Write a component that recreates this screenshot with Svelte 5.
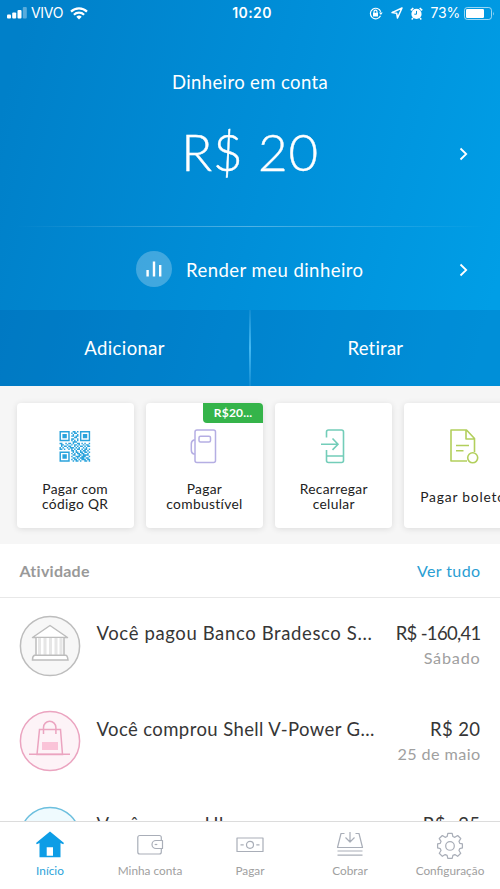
<script>
  const qrRows = [
    '111111100110101111111',
    '100000101011001000001',
    '101110100100101011101',
    '101110101101101011101',
    '101110100011001011101',
    '100000101100101000001',
    '111111101010101111111',
    '000000000111000000000',
    '110010110100110101001',
    '011001001011010010110',
    '010110110010101101011',
    '101001011101010010100',
    '110100101010110101101',
    '000000001101001011010',
    '111111100101101101101',
    '100000101010110110010',
    '101110100110011011110',
    '101110101001110111001',
    '101110100110101110110',
    '100000101011010111011',
    '111111100101101001101'
  ];
  const qrPath = qrRows
    .map((row, y) => [...row].map((c, x) => (c === '1' ? `M${x} ${y}h1v1h-1z` : '')).join(''))
    .join('');

  const shortcuts = [
    { icon: 'qr', label: 'Pagar com\ncódigo QR' },
    { icon: 'fuel', label: 'Pagar\ncombustível', badge: 'R$20...' },
    { icon: 'phone', label: 'Recarregar\ncelular' },
    { icon: 'bill', label: 'Pagar boleto' }
  ];

  const activity = [
    { icon: 'bank', title: 'Você pagou Banco Bradesco S...', amount: 'R$ -160,41', date: 'Sábado' },
    { icon: 'bag', title: 'Você comprou Shell V-Power G...', amount: 'R$ 20', date: '25 de maio' },
    { icon: 'car', title: 'Você pagou Uber', amount: 'R$ -25', date: '' }
  ];

  const tabs = [
    { icon: 'home', label: 'Início' },
    { icon: 'wallet', label: 'Minha conta' },
    { icon: 'cash', label: 'Pagar' },
    { icon: 'collect', label: 'Cobrar' },
    { icon: 'gear', label: 'Configuração' }
  ];
</script>

<div class="screen">
  <header>
    <div class="status">
      <div class="left">
        <svg width="20" height="12" viewBox="0 0 20 12" fill="#fff">
          <rect x="0" y="7.5" width="4" height="4" rx="1" />
          <rect x="5.2" y="5.5" width="4" height="6" rx="1" />
          <rect x="10.5" y="3" width="4" height="8.5" rx="1" />
          <rect x="15.8" y="0" width="4" height="11.5" rx="1" opacity=".35" />
        </svg>
        <span class="carrier">VIVO</span>
        <svg class="wifi" width="18" height="13" viewBox="0 0 18 13" fill="none" stroke="#fff" stroke-width="2.2">
          <path d="M1 4.6a11.5 11.5 0 0 1 16 0" />
          <path d="M3.9 7.7a7.3 7.3 0 0 1 10.2 0" />
          <path d="M9 12.5L6.3 9.8a3.9 3.9 0 0 1 5.4 0z" fill="#fff" stroke="none" />
        </svg>
      </div>
      <b class="clock">10:20</b>
      <div class="right">
        <svg width="14" height="13" viewBox="0 0 14 13" fill="none" stroke="#fff" stroke-width="1.2">
          <path d="M11.5 8.8A5.3 5.3 0 1 1 11.7 4.8" />
          <path d="M10 5.5h3.7L11.9 8z" fill="#fff" stroke="none" />
          <rect x="4" y="5.8" width="5" height="3.7" fill="#fff" stroke="none" />
          <path d="M5 6V4.7a1.5 1.5 0 0 1 3 0V6" />
        </svg>
        <svg class="loc" width="12" height="12" viewBox="0 0 12 12" fill="none" stroke="#fff" stroke-width="1.5" stroke-linejoin="round">
          <path d="M11 1L1 5.6l4.7.7L6.5 11z" />
        </svg>
        <svg class="alarm" width="13" height="13" viewBox="0 0 13 13">
          <circle cx="6.5" cy="6.9" r="5.1" fill="#fff" />
          <path d="M.8 3.400L3.300 1M12.200 3.400L9.700 1M3 11l-1.300 1.500M10 11l1.300 1.500" stroke="#fff" stroke-width="1.5" />
          <path d="M6.500 3.900v3.300H4.300" fill="none" stroke="#0494dc" stroke-width="1" />
        </svg>
        <span class="pct">73%</span>
        <svg width="31" height="13" viewBox="0 0 31 13">
          <rect x=".5" y=".5" width="27" height="12" rx="2.8" fill="none" stroke="#fff" stroke-opacity=".6" />
          <rect x="2" y="2" width="18" height="9" rx="1.2" fill="#fff" />
          <path d="M29 4.500q1.500 2 0 4z" fill="#fff" opacity=".6" />
        </svg>
      </div>
    </div>

    <div class="balance">
      <span class="caption">Dinheiro em conta</span>
      <span class="amount">R$ 20</span>
      <svg class="chevron" width="9" height="14" viewBox="0 0 9 14"><path d="M1.500 1.500L7.200 7l-5.700 5.500" /></svg>
    </div>

    <div class="invest">
      <span class="chart">
        <svg width="16" height="16" viewBox="0 0 16 16" stroke="#fff" stroke-width="2.4">
          <path d="M1.600 9v6.500M8 .5v15M14.200 4v11.500" />
        </svg>
      </span>
      <span class="label">Render meu dinheiro</span>
      <svg class="chevron" width="9" height="14" viewBox="0 0 9 14"><path d="M1.500 1.500L7.200 7l-5.700 5.500" /></svg>
    </div>

    <div class="actions">
      <span>Adicionar</span>
      <i></i>
      <span class="take">Retirar</span>
    </div>
  </header>

  <section class="shortcuts">
    {#each shortcuts as s}
      <div class="card {s.icon}">
        {#if s.badge}<span class="badge">{s.badge}</span>{/if}
        {#if s.icon === 'qr'}
          <svg width="36" height="36" viewBox="-2 -2 36 36"><path transform="translate(.5 0) scale(1.46)" d={qrPath} fill="#2aa3dc" /></svg>
        {:else if s.icon === 'fuel'}
          <svg width="36" height="36" viewBox="0 0 36 36" fill="none" stroke="#b5aee3" stroke-width="1.5" stroke-linejoin="round">
            <rect x="9" y="1" width="20.5" height="32.5" rx="2" />
            <rect x="13" y="7.2" width="11.5" height="5.8" rx="1.5" />
            <path d="M9 11H7.800q-2.500 1-2.500 4v6q0 3.500 2.500 4H9" />
          </svg>
        {:else if s.icon === 'phone'}
          <svg width="36" height="36" viewBox="0 0 36 36" fill="none" stroke="#73cdb9" stroke-width="1.6">
            <path d="M10.500 8.500V3q0-2 2-2h13q2 0 2 2v28.500q0 2-2 2h-13q-2 0-2-2V21M10.500 27h17" />
            <path d="M5 15.200h16.500M16.500 9.500l5.500 5.700-5.500 5.700" />
          </svg>
        {:else}
          <svg width="36" height="36" viewBox="0 0 36 36" fill="none" stroke="#b2cf5c" stroke-width="1.6" stroke-linejoin="round">
            <path d="M22 32H6V1h15.500l8 8.500V23M21 1.500V10h8.500M11 16.500h13M11 21.800h7.500" />
            <circle cx="27.7" cy="28.8" r="5" />
          </svg>
        {/if}
        <div class="name"><p>{s.label}</p></div>
      </div>
    {/each}
  </section>

  <div class="list-head">
    <b>Atividade</b>
    <span>Ver tudo</span>
  </div>

  <section class="list">
    {#each activity as a}
      <article class={a.icon}>
        {#if a.icon === 'bank'}
          <svg width="62" height="62" viewBox="0 0 62 62" fill="none" stroke="#bdbdbd" stroke-width="1.5">
            <circle cx="31" cy="31" r="29.6" fill="#f7f7f7" />
            <path d="M13.500 22.500L31 10.500l17.500 12z" fill="#fff" stroke-linejoin="round" />
            <rect x="17" y="23" width="28" height="17" fill="#fff" stroke="none" />
            <path d="M20.500 23v17M26 23v17M31.500 23v17M37 23v17M42 23v17" stroke="#e6e6e6" stroke-width="3" />
            <path d="M17 22.500v17.500M45 22.500v17.500" />
            <path d="M15.500 40.300h31q2 0 2.500 4.700H13.500q0-4 2-4.700z" fill="#fff" />
          </svg>
        {:else if a.icon === 'bag'}
          <svg width="62" height="62" viewBox="0 0 62 62" fill="none" stroke="#eba4c0" stroke-width="1.5">
            <circle cx="31" cy="31" r="29.6" fill="#fdf3f7" />
            <path d="M20.500 19.500h21l2 25h-25.500z" />
            <path d="M24.500 24v-6.500a6.200 6.200 0 0 1 12.400 0V24" />
            <path d="M10 44.300h41" />
            <rect x="23" y="32" width="16" height="8" fill="#fac4d8" stroke="none" />
          </svg>
        {:else}
          <svg width="62" height="62" viewBox="0 0 62 62" fill="none" stroke="#6cbfde" stroke-width="1.5">
            <circle cx="31" cy="31" r="29.6" fill="#effafe" />
          </svg>
        {/if}
        <span class="title">{a.title}</span>
        <div class="value">
          <span class="money">{a.amount}</span>
          <span class="date">{a.date}</span>
        </div>
      </article>
    {/each}
  </section>

  <nav>
    {#each tabs as t}
      <div class="tab" class:active={t.icon === 'home'}>
        <svg width="30" height="30" viewBox="0 0 30 30" fill="none" stroke="#a9aeb8" stroke-width="1.2" stroke-linejoin="round">
          {#if t.icon === 'home'}
            <path d="M15 1.500L29 13l-.8 1.200L25.500 13v14.300H4.500V13L1.800 14.200 1 13zM11.700 17.300v8.400h6.300v-8.400z" fill="#0d9de6" stroke="none" fill-rule="evenodd" />
          {:else if t.icon === 'wallet'}
            <rect x="2.8" y="5.5" width="23.5" height="18.5" rx="2" />
            <path d="M27.500 10.500h-6.500a4 4 0 0 0 0 8h6.500z" fill="#fff" />
            <path d="M19.700 14.500h2.600" />
          {:else if t.icon === 'cash'}
            <rect x="2" y="8" width="26" height="13.5" />
            <circle cx="15" cy="14.8" r="3.5" />
            <path d="M5.500 14.800h3.200M21.300 14.800h3.200" />
          {:else if t.icon === 'collect'}
            <path d="M9.500 3.500H6L2.500 17.500h25L24 3.500h-3.500M15 2v9.500M10.500 7.500l4.500 4.500 4.500-4.500M2.500 21h25M2.500 25.200h25" />
          {:else}
            <g transform="translate(1.800 1.600) scale(.88)" stroke-width="1.4">
              <path d="M12.500 2h5l.8 3.600 2.200.9 3.200-2 3.500 3.400-2 3.200.9 2.200 3 .7v4.600l-3 .7-.9 2.200 2 3.100-3.500 3.500-3.200-2-2.200.9-.8 3.500h-5l-.8-3.500-2.200-.9-3.200 2-3.500-3.500 2-3.100-.9-2.200-3-.7V14l3-.7.9-2.200-2-3.200 3.500-3.400 3.200 2 2.200-.9z" />
              <circle cx="15" cy="16.300" r="4.900" />
            </g>
          {/if}
        </svg>
        <span>{t.label}</span>
      </div>
    {/each}
  </nav>
</div>

<style>
  :global(body) { margin: 0; background: #fff; }
  .screen {
    width: 500px; height: 889px; overflow: hidden;
    display: flex; flex-direction: column;
    background: #fff; color: #363636;
    font-family: Lato, "Liberation Sans", sans-serif;
  }
  svg { display: block; flex: none; }
  header {
    height: 386px; flex: none; display: flex; flex-direction: column;
    color: #fff;
    background: linear-gradient(105deg, #0080c9 5%, #008fd9 52%, #009ee6 95%);
  }
  .status { height: 26px; display: flex; align-items: center; padding: 0 5px 0 7px; }
  .left, .right { flex: 1; display: flex; align-items: center; }
  .right { justify-content: flex-end; }
  .carrier { margin-left: 4px; font: 14px/26px Inter, sans-serif; letter-spacing: -.3px; }
  .wifi { margin-left: 7px; }
  .clock { font: 600 14px/26px Inter, sans-serif; letter-spacing: .4px; padding-left: 2px; }
  .loc { margin-left: 8px; }
  .alarm { margin-left: 7px; }
  .pct { margin: 0 4px 0 8px; font: 14px/26px Inter, sans-serif; letter-spacing: -.2px; }
  .balance {
    height: 200px; position: relative; display: flex; flex-direction: column; align-items: center;
  }
  .caption { margin-top: 44px; font-size: 18.5px; line-height: 24px; letter-spacing: .38px; }
  .amount {
    margin-top: 28px; font-size: 51px; line-height: 60px; font-weight: 300;
    letter-spacing: .8px; -webkit-text-stroke: .4px #fff;
  }
  .chevron { fill: none; stroke: #fff; stroke-width: 1.8; }
  .balance .chevron { position: absolute; right: 32px; top: 121px; }
  .invest {
    height: 84px; box-sizing: border-box; display: flex; align-items: center; padding: 3px 32px 0 136px;
    background: linear-gradient(90deg, #fff0 3%, #ffffff50 50%, #fff0 97%) top / 100% 1px no-repeat;
  }
  .chart {
    width: 36px; height: 36px; border-radius: 50%; background: #ffffff40; margin-bottom: 1px;
    display: flex; align-items: center; justify-content: center;
  }
  .invest .label { flex: 1; margin-left: 14px; font-size: 18.5px; letter-spacing: .46px; }
  .actions {
    height: 76px; display: flex; align-items: center;
    background: #00509b2e; font-size: 18.5px; letter-spacing: .4px;
  }
  .actions span { flex: 1; text-align: center; }
  .actions .take { letter-spacing: .2px; }
  .actions i { width: 1.5px; height: 76px; background: linear-gradient(#fff1, #45b9f2, #fff1); }
  .shortcuts {
    height: 141px; flex: none; display: flex; gap: 12px; padding: 17px 0 0 16.5px;
    background: #f6f6f6; overflow: hidden;
  }
  .card {
    position: relative; flex: none; width: 117.3px; height: 125px; box-sizing: border-box;
    padding-top: 26px; border-radius: 4px; background: #fff; box-shadow: 0 1px 6px #0000001c;
    display: flex; flex-direction: column; align-items: center;
  }
  .name { height: 62px; display: flex; align-items: center; }
  .name p {
    margin: 0; text-align: center; white-space: pre;
    font-size: 13.8px; line-height: 15px; color: #222; letter-spacing: .32px;
  }
  .bill p { letter-spacing: .8px; }
  .badge {
    position: absolute; right: 0; top: 0; width: 60px; height: 19.5px; border-radius: 0 4px 0 4px;
    background: #35b44a; color: #fff; font-size: 12px; font-weight: 700; line-height: 19px; text-align: center;
    letter-spacing: .2px;
  }
  .list-head {
    height: 53px; flex: none; display: flex; justify-content: space-between; align-items: center;
    padding: 0 19.5px; border-bottom: 1px solid #e8e8e8; font-size: 16px;
  }
  .list-head b { color: #999; letter-spacing: .25px; }
  .list-head span { color: #2a9ed3; letter-spacing: .4px; }
  .list { height: 223px; flex: none; overflow: hidden; }
  article { height: 95.5px; display: flex; align-items: flex-start; padding: 17px 19.5px 0 18.5px; box-sizing: border-box; }
  article svg { margin-top: -.5px; }
  .title { margin: 6px 0 0 16px; flex: 1; font-size: 18.5px; line-height: 24px; white-space: nowrap; letter-spacing: .4px; }
  .bank .title { letter-spacing: .62px; }
  .car .title { letter-spacing: .8px; }
  .value { display: flex; flex-direction: column; align-items: flex-end; padding-top: 6px; }
  .money { font-size: 18.5px; line-height: 24px; letter-spacing: .4px; }
  .bank .money { letter-spacing: -.7px; }
  .date { margin-top: 2px; font-size: 16.2px; line-height: 22px; color: #a0a0a0; letter-spacing: .4px; }
  .bank .date { letter-spacing: .8px; }
  nav { flex: 1; display: flex; border-top: 1px solid #dcdcdc; background: #fff; }
  .tab {
    flex: 1; display: flex; flex-direction: column; align-items: center; padding-top: 8px;
    font-size: 11.8px; line-height: 16px; color: #a0a0a0; letter-spacing: 0;
  }
  .tab svg { position: relative; left: -.5px; }
  .tab span { margin-top: 3px; }
  .tab.active { color: #2ba3da; }
</style>
